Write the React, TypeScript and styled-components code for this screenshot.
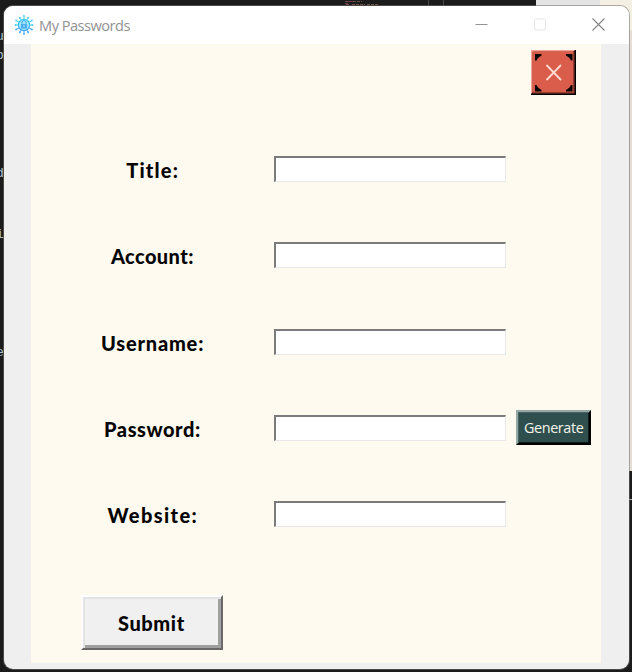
import React from "react";
import styled, { createGlobalStyle } from "styled-components";

const GlobalStyle = createGlobalStyle`
  * { box-sizing: border-box; }
  body { margin: 0; overflow: hidden; }
`;

const Desktop = styled.div`
  position: relative;
  width: 632px;
  height: 672px;
  padding: 6px 3px 3px 4px;
  overflow: hidden;
  background:
    linear-gradient(#e4e4e4, #e4e4e4) 536px 0 / 64px 6px no-repeat,
    linear-gradient(#f3efe2, #f3efe2) 600px 0 / 32px 30px no-repeat,
    linear-gradient(#e4ded6, #e4ded6) 600px 30px / 32px 441px no-repeat,
    linear-gradient(#444, #444) 428px 0 / 1px 6px no-repeat,
    linear-gradient(#444, #444) 443px 0 / 1px 6px no-repeat,
    linear-gradient(#bbb, #bbb) 629px 499px / 3px 1px no-repeat,
    #1c1b1b;
`;

const CodeGlyph = styled.span<{ $top: number }>`
  position: absolute;
  top: ${(p) => p.$top}px;
  left: -4px;
  font: 13px/16px "Liberation Mono", monospace;
  color: #a9c4d2;
`;

const CodeMap = styled.svg`
  position: absolute;
  left: 345px;
  top: 0;
`;

const Window = styled.main`
  position: relative;
  width: 625px;
  height: 663px;
  border-radius: 9px;
  overflow: hidden;
  background: #efefef;
  box-shadow: 0 0 0 1px rgba(115, 110, 105, 0.55);
`;

const TitleBar = styled.header`
  display: flex;
  align-items: center;
  height: 38px;
  padding: 0 1px 1px 10px;
  background: #fff;
`;

const WindowTitle = styled.h1`
  flex: 1;
  margin: 0 0 0 5px;
  font: 400 14.6px/20px "Open Sans", "Noto Sans", sans-serif;
  letter-spacing: -0.5px;
  color: #929292;
`;

const WindowControls = styled.div`
  display: flex;
`;

const WindowControl = styled.button`
  display: grid;
  place-items: center;
  width: 58.5px;
  height: 37px;
  padding: 0;
  border: 0;
  background: transparent;
`;

const Panel = styled.section`
  display: flex;
  flex-direction: column;
  width: 570px;
  height: 618.5px;
  margin-left: 27.4px;
  background: #fffaef;
`;

const PanelHeader = styled.div`
  display: flex;
  justify-content: flex-end;
  height: 82px;
  padding: 6px 25px 0 0;
`;

const CloseButton = styled.button`
  width: 45px;
  height: 45px;
  padding: 0;
  border: 0;
  background: transparent;
  svg { display: block; }
`;

const FieldRow = styled.div`
  display: grid;
  grid-template-columns: 242.5px 232px 76px;
  align-items: center;
  height: 86.25px;
`;

const FieldLabel = styled.label<{ $spacing: number }>`
  justify-self: center;
  font: 900 20px/28px "Comic Sans MS", Lato, sans-serif;
  letter-spacing: ${(p) => p.$spacing}px;
  margin-right: ${(p) => 1 - p.$spacing}px;
  padding-top: 2px;
  color: #050505;
  white-space: nowrap;
`;

const FieldInput = styled.input`
  width: 232px;
  height: 26px;
  padding: 2px 4px;
  border: 2px solid;
  border-color: #7b7b7b #e8e8ea #e8e8ea #7b7b7b;
  border-right-width: 1px;
  border-bottom-width: 1px;
  outline: 0;
  background: #fff;
  font: 14px "Open Sans", sans-serif;
`;

const GenerateButton = styled.button`
  width: 75.5px;
  height: 35px;
  margin-left: 10px;
  padding: 1px 0 0;
  border: 2px solid;
  border-color: #96a9a7 #000 #000 #96a9a7;
  box-shadow: inset 1px 1px 0 #49625f, inset -1px -1px 0 #0c1918;
  background: #2f4f4f;
  font: 400 14.4px/20px "Open Sans", "Noto Sans", sans-serif;
  letter-spacing: -0.4px;
  color: #f4f4e9;
`;

const SubmitButton = styled.button`
  width: 142px;
  height: 54.5px;
  margin: 38px 0 0 50px;
  padding: 1px 2px 0 0;
  border: 2px solid;
  border-color: #fff #696969 #696969 #fff;
  box-shadow: inset 2px 2px 0 #e3e3e3, inset -3px -3px 0 #a0a0a0;
  background: #f0f0f0;
  font: 900 20px/28px "Comic Sans MS", Lato, sans-serif;
  letter-spacing: 0.6px;
  color: #050505;
`;

const fields = [
  { name: "Title", spacing: 1.2 },
  { name: "Account", spacing: 0.4 },
  { name: "Username", spacing: 0.8 },
  { name: "Password", spacing: 0.55 },
  { name: "Website", spacing: 1.4 },
];

function AppIcon() {
  const rays = [0, 30, 60, 90, 120, 150, 180, 210, 240, 270, 300, 330];
  return (
    <svg width="20" height="20" viewBox="0 0 20 20" fill="none">
      <defs>
        <linearGradient id="chip" x1="0" y1="0" x2="0" y2="20" gradientUnits="userSpaceOnUse">
          <stop stopColor="#38dcec" />
          <stop offset="1" stopColor="#3d9dfc" />
        </linearGradient>
      </defs>
      <circle cx="10" cy="10" r="5.6" stroke="url(#chip)" strokeWidth="1.2" fill="#a9e2fa" />
      {rays.map((angle, i) => (
        <g key={angle} transform={`rotate(${angle} 10 10)`}>
          <path d={i % 2 ? "M10 4V2" : "M10 4V1.3"} stroke={i > 3 && i < 9 ? "#459ffa" : "#40cdf0"} strokeWidth="1" />
          <circle cx="10" cy={i % 2 ? 1.6 : 0.9} r="0.9" fill={i > 3 && i < 9 ? "#459ffa" : "#40cdf0"} />
        </g>
      ))}
      <path d="M8 9V7.5a2 2 0 0 1 4 0V9" stroke="#35b4ea" />
      <rect x="7" y="9" width="6" height="4.5" rx="0.6" fill="#45adf5" />
      <circle cx="10" cy="11" r="0.8" fill="#e1faff" />
    </svg>
  );
}

function CloseArt() {
  return (
    <svg width="45" height="45" viewBox="0 0 45 45">
      <path fill="#000" d="M0 0h45v45H0z" />
      <path fill="#f5a397" d="M0 0h44L0 44z" />
      <path fill="#973c30" d="M1.5 1.5H43.5V43.5H1.5z" />
      <path fill="#da5c4b" d="M1.5 1.5H42V42H1.5z" />
      <path
        fill="#090504"
        d="M4 4h6.5v1.5L9 6.5 7 8 5.5 10.5H4zM41.5 4H35v1.5l1.5 1L38.5 8l1.5 2.5h1.5zM4 41.5h6.5V40L9 39 7 37.5 5.5 35H4zM41.5 41.5H35V40l1.5-1 2-1.5L40 35h1.5z"
      />
      <path d="m15.5 15 14.5 15m0-15L15.5 30" stroke="#ffdcd2" strokeWidth="1.8" />
    </svg>
  );
}

export default function App() {
  return (
    <Desktop>
      <GlobalStyle />
      <CodeGlyph $top={29}>u</CodeGlyph>
      <CodeGlyph $top={48}>b</CodeGlyph>
      <CodeGlyph $top={166}>d</CodeGlyph>
      <CodeGlyph $top={227}>i</CodeGlyph>
      <CodeGlyph $top={345}>e</CodeGlyph>
      <CodeMap width="34" height="6" viewBox="0 0 34 6">
        <path d="M0 1.5h3m1 0h13M1 4.5h3m3 0h13m2 0h11" stroke="#6b514a" strokeDasharray="3 1" />
        <path d="M3 1.5h5M0 3.5h3" stroke="#6f394b" />
      </CodeMap>
      <Window>
        <TitleBar>
          <AppIcon />
          <WindowTitle>My Passwords</WindowTitle>
          <WindowControls>
            <WindowControl aria-label="Minimize">
              <svg width="13" height="13"><path d="M.5 6.5h12" stroke="#929292" /></svg>
            </WindowControl>
            <WindowControl aria-label="Maximize">
              <svg width="13" height="13"><rect x=".5" y="1" width="11" height="11" rx="1" fill="none" stroke="#e7e7e7" /></svg>
            </WindowControl>
            <WindowControl aria-label="Close window">
              <svg width="13" height="13"><path d="m.5.5 12 12m0-12-12 12" stroke="#858585" strokeWidth="1.1" /></svg>
            </WindowControl>
          </WindowControls>
        </TitleBar>
        <Panel>
          <PanelHeader>
            <CloseButton aria-label="Close"><CloseArt /></CloseButton>
          </PanelHeader>
          {fields.map(({ name, spacing }) => (
            <FieldRow key={name}>
              <FieldLabel htmlFor={name} $spacing={spacing}>{name}:</FieldLabel>
              <FieldInput id={name} />
              {name === "Password" && <GenerateButton>Generate</GenerateButton>}
            </FieldRow>
          ))}
          <SubmitButton>Submit</SubmitButton>
        </Panel>
      </Window>
    </Desktop>
  );
}
